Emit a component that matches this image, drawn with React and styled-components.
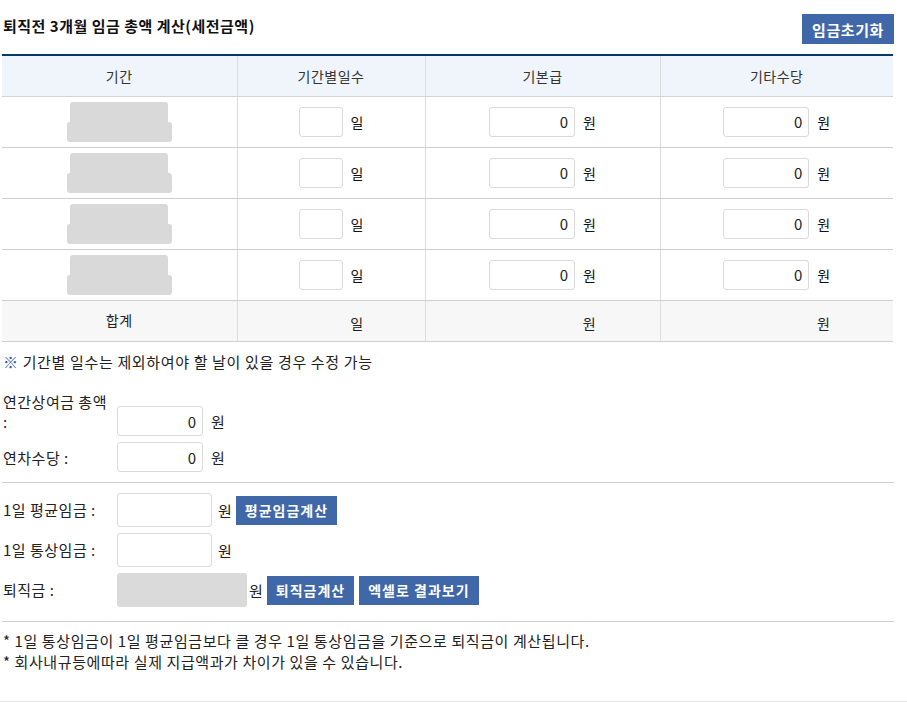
import React from "react";
import styled, { createGlobalStyle } from "styled-components";

const Global = createGlobalStyle`
  html, body { margin: 0; padding: 0; background: #fff; }
  body { font-family: "Noto Sans CJK KR", "Noto Sans", sans-serif; color: #111; }
  * { box-sizing: border-box; }
`;

const Page = styled.div`
  width: 907px;
  padding: 0 13px 0 2px;
`;

const TopBar = styled.div`
  display: flex;
  align-items: flex-start;
  justify-content: space-between;
  padding: 14px 0 0 1px;
  margin-bottom: 10px;
`;

const Title = styled.h2`
  margin: 0;
  padding-top: 1px;
  font-size: 15px;
  line-height: 21px;
  font-weight: 700;
  letter-spacing: 0.5px;
  color: #111;
`;

const Button = styled.button`
  height: ${(p) => p.$h || 29}px;
  padding: 0 ${(p) => p.$px || 9}px;
  border: none;
  background: #4068a8;
  color: #fff;
  font-family: inherit;
  font-size: ${(p) => p.$fs || 14}px;
  font-weight: 700;
  letter-spacing: ${(p) => p.$ls ?? 1}px;
  cursor: pointer;
`;

const Table = styled.table`
  width: 891px;
  border-collapse: collapse;
  table-layout: fixed;
  border-top: 2px solid #0b3868;
`;

const Th = styled.th`
  height: 41px;
  background: #f0f4fb;
  font-weight: 400;
  font-size: 14px;
  letter-spacing: 0.5px;
  color: #333;
  border-bottom: 1px solid #d4d4d4;
  border-left: 1px solid #dcdcdc;
  &:first-child { border-left: none; }
`;

const Td = styled.td`
  height: 51px;
  text-align: center;
  border-bottom: 1px solid #cfcfcf;
  border-left: 1px solid #dcdcdc;
  &:first-child { border-left: none; }
`;

const SumTd = styled.td`
  height: 41px;
  text-align: center;
  background: #f7f7f7;
  border-top: 1px solid #0b3868;
  border-bottom: 1px solid #cfcfcf;
  border-left: 1px solid #dcdcdc;
  font-size: 14px;
  letter-spacing: 0.5px;
  color: #222;
  padding-bottom: 3px;
  &:first-child { border-left: none; }
`;

const CellInner = styled.div`
  display: inline-flex;
  align-items: center;
  gap: 8px;
  font-size: 14px;
`;

const Input = styled.input`
  width: ${(p) => p.$w}px;
  height: ${(p) => p.$h || 30}px;
  flex: 0 0 auto;
  border: 1px solid #dadada;
  border-radius: 3px;
  padding: 0 6px;
  text-align: right;
  font-family: inherit;
  font-size: 15px;
  color: #222;
  background: ${(p) => (p.$grey ? "#dadada" : "#fff")};
  outline: none;
`;

const Spacer = styled.span`
  display: inline-block;
  width: ${(p) => p.$w}px;
`;

const Blur = styled.div`
  display: inline-flex;
  flex-direction: column;
  align-items: center;
  vertical-align: middle;
`;

const BlurTop = styled.div`
  width: 98px;
  height: 21px;
  background: #d9d9d9;
  border-radius: 3px 3px 0 0;
`;

const BlurBottom = styled.div`
  width: 105px;
  height: 20px;
  background: #d9d9d9;
  border-radius: 3px;
  margin-top: -1px;
`;

const Note = styled.p`
  margin: 9px 0 0 1px;
  font-size: 15px;
  line-height: 22px;
  color: #222;
  letter-spacing: 0.65px;
`;

const Mark = styled.span`
  color: #2f5aa5;
`;

const Form = styled.div`
  display: flex;
  flex-direction: column;
  gap: ${(p) => p.$gap || 6}px;
  padding: ${(p) => p.$pad || "0"};
`;

const FormRow = styled.div`
  display: flex;
  align-items: ${(p) => p.$align || "center"};
  padding-left: 1px;
`;

const Label = styled.div`
  flex: 0 0 114px;
  padding-right: 8px;
  font-size: 15px;
  line-height: 20px;
  color: #222;
  letter-spacing: 0.5px;
`;

const Unit = styled.span`
  font-size: 15px;
  color: #222;
  margin: 0 ${(p) => p.$mr ?? 6}px 0 ${(p) => p.$ml ?? 8}px;
`;

const Divider = styled.hr`
  margin: ${(p) => p.$m || "10px 0"};
  border: none;
  border-top: 1px solid #cfcfcf;
  width: 892px;
`;

const Footnotes = styled.div`
  padding: 8px 0 0 1px;
  height: 79px;
  font-size: 15px;
  line-height: 21px;
  color: #222;
  letter-spacing: 0.6px;
`;

const BottomLine = styled.div`
  border-top: 1px solid #e6e6e6;
  width: 907px;
  margin-left: -2px;
`;

const rows = [0, 1, 2, 3];

export default function App() {
  return (
    <>
      <Global />
      <Page>
        <TopBar>
          <Title>퇴직전 3개월 임금 총액 계산(세전금액)</Title>
          <Button $h={30} $px={10} $fs={15} $ls={0.6}>임금초기화</Button>
        </TopBar>
        <Table>
          <colgroup>
            <col style={{ width: 235 }} />
            <col style={{ width: 188 }} />
            <col style={{ width: 235 }} />
            <col style={{ width: 233 }} />
          </colgroup>
          <thead>
            <tr>
              <Th>기간</Th>
              <Th>기간별일수</Th>
              <Th>기본급</Th>
              <Th>기타수당</Th>
            </tr>
          </thead>
          <tbody>
            {rows.map((r) => (
              <tr key={r}>
                <Td>
                  <Blur>
                    <BlurTop />
                    <BlurBottom />
                  </Blur>
                </Td>
                <Td>
                  <CellInner>
                    <Input $w={44} defaultValue="" />
                    <span>일</span>
                  </CellInner>
                </Td>
                <Td>
                  <CellInner>
                    <Input $w={86} defaultValue="0" />
                    <span>원</span>
                  </CellInner>
                </Td>
                <Td>
                  <CellInner>
                    <Input $w={86} defaultValue="0" />
                    <span>원</span>
                  </CellInner>
                </Td>
              </tr>
            ))}
            <tr>
              <SumTd>합계</SumTd>
              <SumTd>
                <CellInner>
                  <Spacer $w={44} />
                  <span>일</span>
                </CellInner>
              </SumTd>
              <SumTd>
                <CellInner>
                  <Spacer $w={86} />
                  <span>원</span>
                </CellInner>
              </SumTd>
              <SumTd>
                <CellInner>
                  <Spacer $w={86} />
                  <span>원</span>
                </CellInner>
              </SumTd>
            </tr>
          </tbody>
        </Table>

        <Note>
          <Mark>※</Mark> 기간별 일수는 제외하여야 할 날이 있을 경우 수정 가능
        </Note>

        <Form $gap={6} $pad="19px 0 0 0">
          <FormRow $align="last baseline">
            <Label>연간상여금 총액 :</Label>
            <Input $w={86} $h={30} defaultValue="0" />
            <Unit>원</Unit>
          </FormRow>
          <FormRow $align="last baseline">
            <Label>연차수당 :</Label>
            <Input $w={86} $h={30} defaultValue="0" />
            <Unit>원</Unit>
          </FormRow>
        </Form>

        <Divider $m="10px 0 10px 0" />

        <Form $gap={6}>
          <FormRow>
            <Label>1일 평균임금 :</Label>
            <Input $w={95} $h={34} defaultValue="" />
            <Unit $ml={6} $mr={4}>원</Unit>
            <Button>평균임금계산</Button>
          </FormRow>
          <FormRow>
            <Label>1일 통상임금 :</Label>
            <Input $w={95} $h={34} defaultValue="" />
            <Unit $ml={6} $mr={4}>원</Unit>
          </FormRow>
          <FormRow>
            <Label>퇴직금 :</Label>
            <Input $w={130} $h={34} $grey defaultValue="" readOnly />
            <Unit $ml={2} $mr={4}>원</Unit>
            <Button>퇴직금계산</Button>
            <Spacer $w={5} />
            <Button>엑셀로 결과보기</Button>
          </FormRow>
        </Form>

        <Divider $m="14px 0 0 0" />

        <Footnotes>
          <div>* 1일 통상임금이 1일 평균임금보다 클 경우 1일 통상임금을 기준으로 퇴직금이 계산됩니다.</div>
          <div>* 회사내규등에따라 실제 지급액과가 차이가 있을 수 있습니다.</div>
        </Footnotes>
        <BottomLine />
      </Page>
    </>
  );
}
